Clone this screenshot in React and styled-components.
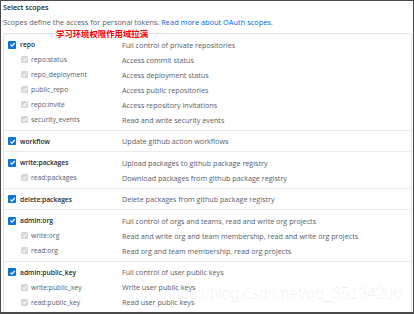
import React from "react";
import styled, { createGlobalStyle } from "styled-components";

const Global = createGlobalStyle`
  html, body { margin: 0; padding: 0; background: #fff; }
  body { font-family: "Open Sans", "Liberation Sans", sans-serif; }
`;

const Frame = styled.div`
  box-sizing: border-box;
  width: 414px;
  height: 314px;
  border: 1px solid #4a4a4a;
  border-bottom-width: 2px;
  overflow: hidden;
  position: relative;
  padding: 0 1px 0 2px;
  background: #fff;
`;

const Title = styled.div`
  font-size: 7.1px;
  font-weight: 600;
  color: #24292e;
  height: 14px;
  line-height: 13px;
  white-space: nowrap;
`;

const Intro = styled.p`
  margin: 0;
  font-size: 7.4px;
  color: #586069;
  height: 15px;
  line-height: 15px;
  white-space: nowrap;
`;

const Link = styled.a`
  color: #0366d6;
  text-decoration: none;
`;

const Box = styled.div`
  margin-top: 3px;
  border: 1px solid #e1e4e8;
  border-radius: 3px;
  position: relative;
`;

const Note = styled.span`
  position: absolute;
  left: 52px;
  top: -6px;
  font-family: "Noto Sans CJK SC", sans-serif;
  font-size: 8.4px;
  line-height: 10px;
  font-weight: 700;
  color: #f50000;
  white-space: nowrap;
`;

const Group = styled.div`
  padding: 3px 0 2.5px;
  border-top: ${(p) => (p.$first ? "none" : "1px solid #e8eaed")};
`;

const Row = styled.div`
  display: grid;
  grid-template-columns: ${(p) => (p.$sub ? "10px 91px 1fr" : "4px 12px 102px 1fr")};
  padding-left: ${(p) => (p.$sub ? "17px" : "0")};
  align-items: center;
  height: 15px;
`;

const Check = styled.span`
  display: flex;
  align-items: center;
  justify-content: center;
  width: ${(p) => (p.$sub ? "7px" : "8px")};
  height: ${(p) => (p.$sub ? "7px" : "8px")};
  border-radius: 1px;
  background: ${(p) => (p.$sub ? "#d6d6d6" : "#0a74d9")};
  grid-column: ${(p) => (p.$sub ? "1" : "2")};
`;

const Label = styled.span`
  font-size: ${(p) => (p.$sub ? "6.8px" : "6.7px")};
  font-weight: ${(p) => (p.$sub ? 400 : 600)};
  color: ${(p) => (p.$sub ? "#586069" : "#24292e")};
  white-space: nowrap;
`;

const Desc = styled.span`
  font-size: 7.2px;
  color: #586069;
  white-space: nowrap;
`;

const Watermark = styled.div`
  position: absolute;
  left: 162px;
  top: 284px;
  font-family: "Liberation Sans", sans-serif;
  font-size: 16px;
  line-height: 18px;
  letter-spacing: -0.2px;
  color: rgba(0, 0, 0, 0.06);
  white-space: nowrap;
  pointer-events: none;
`;

const Tick = ({ light }) => (
  <svg width="7" height="7" viewBox="0 0 10 10">
    <path d="M2 5.2 L4.2 7.3 L8.2 2.8" fill="none" stroke={light ? "#f4f4f4" : "#fff"} strokeWidth="1.8" />
  </svg>
);

const groups = [
  [
    ["repo", "Full control of private repositories"],
    ["repo:status", "Access commit status"],
    ["repo_deployment", "Access deployment status"],
    ["public_repo", "Access public repositories"],
    ["repo:invite", "Access repository invitations"],
    ["security_events", "Read and write security events"],
  ],
  [["workflow", "Update github action workflows"]],
  [
    ["write:packages", "Upload packages to github package registry"],
    ["read:packages", "Download packages from github package registry"],
  ],
  [["delete:packages", "Delete packages from github package registry"]],
  [
    ["admin:org", "Full control of orgs and teams, read and write org projects"],
    ["write:org", "Read and write org and team membership, read and write org projects"],
    ["read:org", "Read org and team membership, read org projects"],
  ],
  [
    ["admin:public_key", "Full control of user public keys"],
    ["write:public_key", "Write user public keys"],
    ["read:public_key", "Read user public keys"],
  ],
];

export default function App() {
  return (
    <>
      <Global />
      <Frame>
        <Title>Select scopes</Title>
        <Intro>
          Scopes define the access for personal tokens. <Link>Read more about OAuth scopes.</Link>
        </Intro>
        <Box>
          <Note>学习环境权限作用域拉满</Note>
          {groups.map((g, gi) => (
            <Group key={gi} $first={gi === 0}>
              {g.map(([name, desc], i) => {
                const sub = i > 0;
                return (
                  <Row key={name} $sub={sub}>
                    {!sub && <span />}
                    <Check $sub={sub}>
                      <Tick light={sub} />
                    </Check>
                    <Label $sub={sub}>{name}</Label>
                    <Desc>{desc}</Desc>
                  </Row>
                );
              })}
            </Group>
          ))}
        </Box>
        <Watermark>https://blog.csdn.net/qq_35134206</Watermark>
      </Frame>
    </>
  );
}
